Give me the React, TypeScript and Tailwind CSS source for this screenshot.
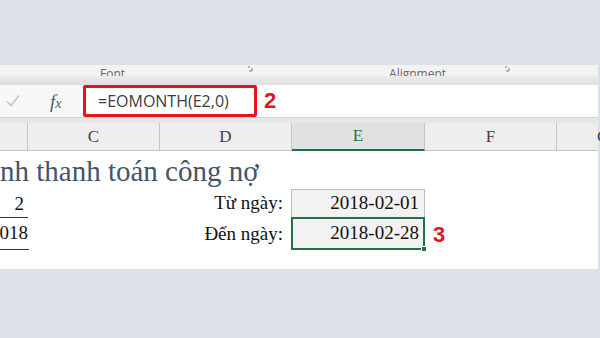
import React from "react";

const serif = { fontFamily: '"Liberation Serif", "Times New Roman", serif' };
const sans = { fontFamily: '"Open Sans", "Noto Sans", sans-serif' };
const bold = { fontFamily: '"Liberation Sans", Arial, sans-serif' };

const columns = ["", "C", "D", "E", "F", "G"];

function Launcher() {
  return (
    <svg width="8" height="6" viewBox="0 0 8 6" className="text-[#7a7a7a]">
      <path d="M1 1h2M5 2v3h-3" stroke="currentColor" strokeWidth="1" fill="none" />
    </svg>
  );
}

function App() {
  return (
    <div className="w-[600px] h-[338px] bg-[#dee0e7] flex flex-col overflow-hidden">
      <div className="h-[65px] shrink-0" />

      <div className="w-[598px] flex flex-col">
        {/* ribbon group captions, top half cut off */}
        <div className="h-[11px] bg-[#f3f3f3] flex items-end overflow-hidden text-[#666] text-[12px] leading-none" style={sans}>
          <span className="ml-[100px] translate-y-[4px]">Font</span>
          <span className="ml-[122px] mb-[4px]">
            <Launcher />
          </span>
          <span className="ml-[134px] translate-y-[4px]">Alignment</span>
          <span className="ml-[58px] mb-[4px]">
            <Launcher />
          </span>
        </div>
        <div className="h-[10px] bg-gradient-to-b from-[#ececec] to-[#dfdfdf] border-b border-[#cfcfcf]" />

        {/* formula bar */}
        <div className="h-[32px] bg-white flex items-center -mt-[1px]">
          <div className="w-[83px] h-full bg-[#f8f8f8] flex items-center">
            <svg width="16" height="14" viewBox="0 0 16 14" className="ml-[5px]">
              <path d="M2 7.5l4 4 8-10" stroke="#c4c4c4" strokeWidth="1.6" fill="none" />
            </svg>
            <span className="ml-[29px] text-[19px] italic text-[#5a5a5a] leading-none" style={serif}>
              f<span className="text-[14px]">x</span>
            </span>
          </div>
          <div className="w-[174px] h-[32px] border-[3px] border-[#e3141b] rounded-[2px] flex items-center pl-[12px] text-[16px] text-[#3c3c3c]" style={sans}>
            =EOMONTH(E2,0)
          </div>
          <span className="ml-[7px] text-[22px] font-bold text-[#e3141b] leading-none" style={bold}>
            2
          </span>
        </div>
        <div className="h-[6px] bg-[#e7e7e7] border-t border-[#d4d4d4]" />

        {/* column headers */}
        <div className="h-[28px] grid grid-cols-[28px_132px_132px_133px_132px_1fr] bg-[#eeeeee] border-b border-[#c6c6c6] text-[17px] text-[#444]" style={serif}>
          {columns.map((c) => (
            <div
              key={c || "b"}
              className={
                c === "E"
                  ? "flex items-center justify-center bg-[#e1e1e1] text-[#217346] border-r border-[#c6c6c6] border-b-2 border-b-[#217346] -mb-[1px]"
                  : c === "G"
                  ? "flex items-center justify-start pl-[40px]"
                  : "flex items-center justify-center border-r border-[#c6c6c6]"
              }
            >
              {c}
            </div>
          ))}
        </div>

        {/* sheet */}
        <div className="h-[118px] bg-white grid grid-cols-[28px_132px_132px_133px_132px_1fr] grid-rows-[38px_29px_32px_1fr] text-[19px] text-[#111]" style={serif}>
          <div className="col-span-6 flex items-end pb-[3px] text-[29px] text-[#44546a] leading-none whitespace-nowrap">
            nh thanh toán công nợ
          </div>

          <div className="border-b border-[#333] flex items-end justify-end pr-[4px] leading-none pb-[4px]">2</div>
          <div />
          <div className="flex items-center justify-end pr-[9px]">Từ ngày:</div>
          <div className="bg-[#f2f2f2] border border-[#bdbdbd] flex items-center justify-end pr-[5px] -ml-[1px]">2018-02-01</div>
          <div />
          <div />

          <div className="border-b border-[#333] flex items-center justify-end pr-[1px] -mr-[1px]">018</div>
          <div />
          <div className="flex items-center justify-end pr-[9px]">Đến ngày:</div>
          <div className="relative bg-[#f2f2f2] border-2 border-[#217346] flex items-center justify-end pr-[4px] -ml-[1px] -mt-[1px]">
            2018-02-28
            <div className="absolute -right-[4px] -bottom-[4px] w-[6px] h-[6px] bg-[#217346] border border-white" />
          </div>
          <div className="flex items-center pl-[8px] text-[22px] font-bold text-[#e3141b]" style={bold}>
            3
          </div>
          <div />
        </div>
      </div>
    </div>
  );
}

export default App;
